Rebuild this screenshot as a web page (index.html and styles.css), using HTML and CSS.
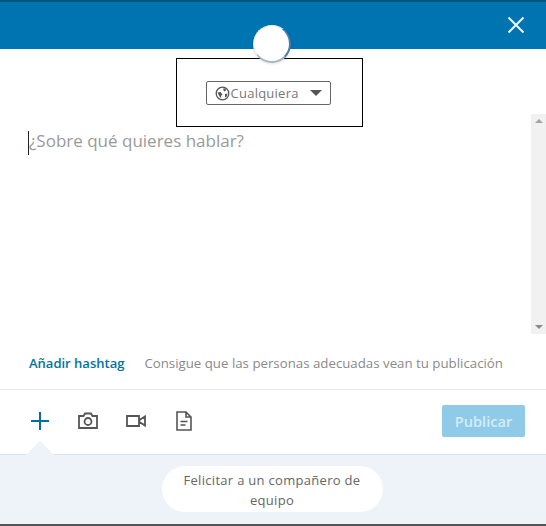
FILE: index.html
```html
<!DOCTYPE html>
<html lang="es">
<head>
  <meta charset="UTF-8">
  <meta name="viewport" content="width=device-width, initial-scale=1.0">
  <title>Publicar</title>
  <link rel="stylesheet" href="styles.css">
</head>
<body>
  <div class="modal">
    <header class="top">
      <button class="close" aria-label="Cerrar">
        <svg width="18" height="18" viewBox="0 0 18 18"><path d="M1.5 1.5l15 15M16.5 1.5l-15 15" stroke="#e8f6fb" stroke-width="2" fill="none"/></svg>
      </button>
      <div class="avatar"></div>
    </header>

    <div class="audience">
      <button class="audience-btn">
        <svg width="15" height="15" viewBox="0 0 15 15"><circle cx="7.5" cy="7.5" r="6.3" fill="none" stroke="#555" stroke-width="1.3"/><path d="M2.500 6.500l3-.5 2 2.500-1.500 1.200.3 2.500-1.800-1.700zM8 2.500l2.500 0 .5 2-2 1zM10 8l2.500-.5-.8 3-1.700.8z" fill="#555"/></svg>
        <span>Cualquiera</span>
        <i class="caret"></i>
      </button>
    </div>

    <div class="editor">
      <p class="placeholder"><i class="cursor"></i>¿Sobre qué quieres hablar?</p>
      <div class="scrollbar">
        <i class="arrow-up"></i>
        <i class="arrow-down"></i>
      </div>
    </div>

    <div class="hashtag-row">
      <a href="#" class="hashtag">Añadir hashtag</a>
      <span class="hint">Consigue que las personas adecuadas vean tu publicación</span>
    </div>

    <div class="toolbar">
      <div class="tools">
        <svg width="20" height="20" viewBox="0 0 20 20"><path d="M10 1v18M1 10h18" stroke="#006f99" stroke-width="2" fill="none"/></svg>
        <svg width="22" height="20" viewBox="0 0 22 20"><path d="M2 5h4.500l1.500-2.500h6L15.500 5H20v12H2z" fill="none" stroke="#555" stroke-width="1.800"/><circle cx="11" cy="10.500" r="3.500" fill="none" stroke="#555" stroke-width="1.800"/></svg>
        <svg width="20" height="20" viewBox="0 0 20 20"><path d="M1 5h12v10H1zM13.500 9l5.500-3.500v9L13.500 11z" fill="none" stroke="#555" stroke-width="1.800"/></svg>
        <svg class="tool-doc" width="16" height="20" viewBox="0 0 16 20"><path d="M1 1h9l5 5v13H1zM10 1v5h5M4.500 10.500h7M4.500 14h5" fill="none" stroke="#555" stroke-width="1.600"/></svg>
      </div>
      <button class="publish">Publicar</button>
    </div>

    <div class="suggest">
      <i class="notch"></i>
      <button class="pill">Felicitar a un compañero de equipo</button>
    </div>
  </div>
</body>
</html>
```

FILE: styles.css
```css
* { margin: 0; padding: 0; box-sizing: border-box; }
html, body { height: 100%; }
body { font-family: "Open Sans", "Noto Sans", sans-serif; background: #fff; color: #666; overflow: hidden; }
button { font-family: inherit; border: none; background: none; }
a { text-decoration: none; }

.modal { height: 526px; display: flex; flex-direction: column; border-bottom: 2px solid #555; }

.top { position: relative; height: 49px; flex: none; background: #0073b1; border-top: 2px solid #00567f; display: flex; justify-content: flex-end; align-items: center; padding-right: 21px; }
.close { display: flex; margin-top: -2px; }
.avatar { position: absolute; left: 253px; top: 23px; width: 38px; height: 38px; border-radius: 50%; background: #fff; border: 1px solid #e6ecef; border-right: 2px solid #4a7cb0; border-bottom: 2px solid #aab4bc; box-shadow: 0 1px 3px rgba(0,0,0,0.12); }

.audience { flex: none; width: 187px; height: 69px; margin: 9px 0 0 176px; border: 1px solid #000; display: flex; align-items: center; justify-content: center; padding-top: 1px; padding-right: 3px; }
.audience-btn { width: 125px; height: 24px; border: 1px solid #666; border-radius: 2px; display: flex; align-items: center; padding-left: 8px; font-size: 13px; letter-spacing: 0.25px; color: #777; }
.audience-btn span { margin-left: 1px; }
.caret { margin-left: 11px; border-left: 6px solid transparent; border-right: 6px solid transparent; border-top: 6px solid #555; }

.editor { position: relative; flex: none; height: 220px; margin-top: -13px; padding: 15px 0 0 28px; }
.placeholder { position: relative; font-size: 17px; line-height: 24px; color: #9a9a9a; }
.cursor { display: inline-block; width: 1px; height: 24px; margin-top: 2px; background: #222; vertical-align: top; }
.scrollbar { position: absolute; right: 0; top: 0; bottom: 0; width: 15px; background: #f1f1f1; }
.arrow-up, .arrow-down { position: absolute; left: 4px; border-left: 4px solid transparent; border-right: 4px solid transparent; }
.arrow-up { top: 5px; border-bottom: 4px solid #a3a3a3; }
.arrow-down { bottom: 5px; border-top: 4px solid #8a8a8a; }

.hashtag-row { flex: none; height: 56px; display: flex; align-items: center; padding: 2px 0 0 29px; border-bottom: 1px solid #e9e9e9; }
.hashtag { font-size: 13px; font-weight: 600; color: #0073a1; }
.hint { margin-left: 20px; font-size: 13.27px; color: #8a8a8a; }

.toolbar { flex: none; height: 65px; display: flex; align-items: center; justify-content: space-between; padding-right: 21px; border-bottom: 1px solid #d9e2e8; }
.tools { display: flex; align-items: center; gap: 27px; padding: 0 0 2px 30px; }
.tool-doc { margin-left: 3px; }
.publish { width: 83px; height: 32px; border-radius: 2px; background: #8fcbe8; color: #d3edf8; font-size: 14.6px; font-weight: 600; margin-bottom: 2px; }

.suggest { position: relative; flex: 1; background: #edf3f8; display: flex; justify-content: center; align-items: center; padding: 0 2px 2px 0; }
.notch { position: absolute; left: 26px; top: -14px; border-left: 14px solid transparent; border-right: 14px solid transparent; border-bottom: 14px solid #edf3f8; }
.pill { width: 221px; height: 46px; border-radius: 23px; background: #fff; color: #666; font-size: 13px; letter-spacing: 0.3px; line-height: 20px; padding: 2px 16px 0; }
```
